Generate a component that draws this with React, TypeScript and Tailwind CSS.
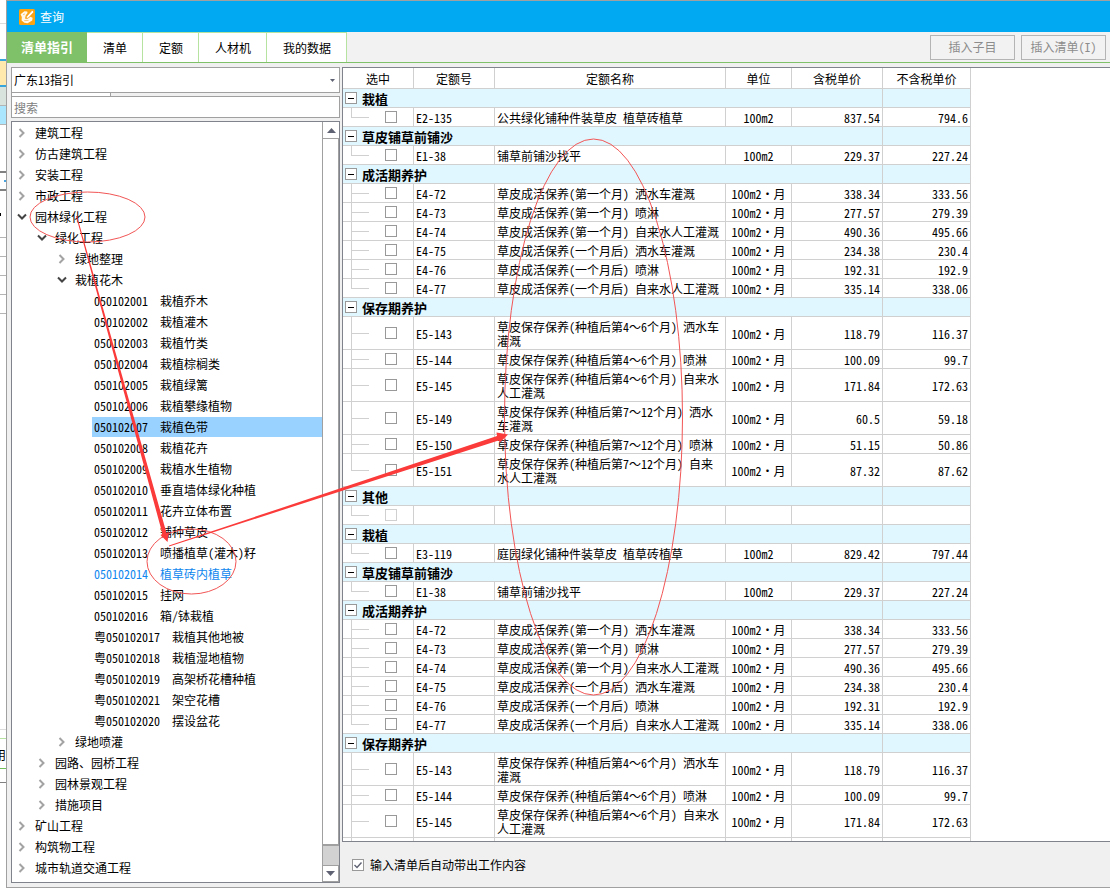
import React, { useState } from "react";

type TreeNode = {
  level: number;
  label: string;
  state?: "open" | "closed";
  selected?: boolean;
  current?: boolean;
};

const tree: TreeNode[] = [
  { level: 0, label: "建筑工程", state: "closed" },
  { level: 0, label: "仿古建筑工程", state: "closed" },
  { level: 0, label: "安装工程", state: "closed" },
  { level: 0, label: "市政工程", state: "closed" },
  { level: 0, label: "园林绿化工程", state: "open" },
  { level: 1, label: "绿化工程", state: "open" },
  { level: 2, label: "绿地整理", state: "closed" },
  { level: 2, label: "栽植花木", state: "open" },
  { level: 3, label: "050102001  栽植乔木" },
  { level: 3, label: "050102002  栽植灌木" },
  { level: 3, label: "050102003  栽植竹类" },
  { level: 3, label: "050102004  栽植棕榈类" },
  { level: 3, label: "050102005  栽植绿篱" },
  { level: 3, label: "050102006  栽植攀缘植物" },
  { level: 3, label: "050102007  栽植色带", selected: true },
  { level: 3, label: "050102008  栽植花卉" },
  { level: 3, label: "050102009  栽植水生植物" },
  { level: 3, label: "050102010  垂直墙体绿化种植" },
  { level: 3, label: "050102011  花卉立体布置" },
  { level: 3, label: "050102012  铺种草皮" },
  { level: 3, label: "050102013  喷播植草(灌木)籽" },
  { level: 3, label: "050102014  植草砖内植草", current: true },
  { level: 3, label: "050102015  挂网" },
  { level: 3, label: "050102016  箱/钵栽植" },
  { level: 3, label: "粤050102017  栽植其他地被" },
  { level: 3, label: "粤050102018  栽植湿地植物" },
  { level: 3, label: "粤050102019  高架桥花槽种植" },
  { level: 3, label: "粤050102021  架空花槽" },
  { level: 3, label: "粤050102020  摆设盆花" },
  { level: 2, label: "绿地喷灌", state: "closed" },
  { level: 1, label: "园路、园桥工程", state: "closed" },
  { level: 1, label: "园林景观工程", state: "closed" },
  { level: 1, label: "措施项目", state: "closed" },
  { level: 0, label: "矿山工程", state: "closed" },
  { level: 0, label: "构筑物工程", state: "closed" },
  { level: 0, label: "城市轨道交通工程", state: "closed" },
];

const indents = ["pl-[5px]", "pl-[25px]", "pl-[45px]", "ml-[80px] pl-[2px]"];

type Quota = [code: string, name: string, unit: string, taxed: string, untaxed: string];
type Group = { title: string; rows: Quota[] };

const month = "100m2・月";

const growing: Quota[] = [
  ["E4-72", "草皮成活保养(第一个月) 洒水车灌溉", month, "338.34", "333.56"],
  ["E4-73", "草皮成活保养(第一个月) 喷淋", month, "277.57", "279.39"],
  ["E4-74", "草皮成活保养(第一个月) 自来水人工灌溉", month, "490.36", "495.66"],
  ["E4-75", "草皮成活保养(一个月后) 洒水车灌溉", month, "234.38", "230.4"],
  ["E4-76", "草皮成活保养(一个月后) 喷淋", month, "192.31", "192.9"],
  ["E4-77", "草皮成活保养(一个月后) 自来水人工灌溉", month, "335.14", "338.06"],
];

const keeping: Quota[] = [
  ["E5-143", "草皮保存保养(种植后第4～6个月) 洒水车灌溉", month, "118.79", "116.37"],
  ["E5-144", "草皮保存保养(种植后第4～6个月) 喷淋", month, "100.09", "99.7"],
  ["E5-145", "草皮保存保养(种植后第4～6个月) 自来水人工灌溉", month, "171.84", "172.63"],
  ["E5-149", "草皮保存保养(种植后第7～12个月) 洒水车灌溉", month, "60.5", "59.18"],
  ["E5-150", "草皮保存保养(种植后第7～12个月) 喷淋", month, "51.15", "50.86"],
  ["E5-151", "草皮保存保养(种植后第7～12个月) 自来水人工灌溉", month, "87.32", "87.62"],
];

const sand: Quota[] = [["E1-38", "铺草前铺沙找平", "100m2", "229.37", "227.24"]];

const blank: Quota = ["", "", "", "", ""];

const groups: Group[] = [
  { title: "栽植", rows: [["E2-135", "公共绿化铺种件装草皮 植草砖植草", "100m2", "837.54", "794.6"]] },
  { title: "草皮铺草前铺沙", rows: sand },
  { title: "成活期养护", rows: growing },
  { title: "保存期养护", rows: keeping },
  { title: "其他", rows: [blank] },
  { title: "栽植", rows: [["E3-119", "庭园绿化铺种件装草皮 植草砖植草", "100m2", "829.42", "797.44"]] },
  { title: "草皮铺草前铺沙", rows: sand },
  { title: "成活期养护", rows: growing },
  { title: "保存期养护", rows: [...keeping.slice(0, 3), blank] },
];

function Chevron({ open }: { open: boolean }) {
  return (
    <svg className="h-[10px] w-[10px] shrink-0" viewBox="0 0 10 10" fill="none" strokeWidth="2" aria-hidden="true">
      {open ? (
        <path d="M1 2.5L5 6.5L9 2.5" stroke="#444444" />
      ) : (
        <path d="M2.5 1L6.5 5L2.5 9" stroke="#a3a3a3" />
      )}
    </svg>
  );
}

function Logo() {
  return (
    <svg className="h-4 w-4" viewBox="0 0 16 16" aria-hidden="true">
      <rect width="16" height="16" rx="1.5" fill="#fca311" />
      <path
        d="M1.6 5.2L5.4 2.2L8.2 2.6L8.6 4L6.8 6.2L6 9.4L8.6 9.6L11.4 7.8L13.6 8.8L13.2 11.4L8.6 14.2L5.4 13.8L2.6 11.4L2.8 8Z"
        fill="#fff8ea"
      />
      <path d="M13.2 1.2L15 3L9.6 8.8L7 9.8L7.8 7.2Z" fill="#ffffff" stroke="#f59a1a" strokeWidth="0.7" />
      <path d="M4 5.8L6 4.8M5.2 11.6L9.6 11.4" stroke="#f7b04a" strokeWidth="0.7" />
    </svg>
  );
}

function BackgroundStrip() {
  return (
    <div className="flex w-[6px] shrink-0 flex-col overflow-hidden bg-white" aria-hidden="true">
      <div className="h-6 shrink-0 border-b border-[#dcdcdc]" />
      <div className="h-[37px] shrink-0 border-b-2 border-[#35a5dc]" />
      <div className="h-[26px] shrink-0 border-b-2 border-[#35a5dc] bg-[#ffe9ad]" />
      <div className="h-[19px] shrink-0 border-b border-[#b4b4b4] bg-[#d9e3dd]" />
      <div className="h-[19px] shrink-0 border-b border-[#b4b4b4] bg-[#aae6fd]" />
      <div className="h-12 shrink-0 border-b-2 border-[#808080]" />
      <div className="flex h-[18px] shrink-0 items-center justify-end border-b-2 border-[#808080]">
        <div className="h-[2px] w-[2px] bg-[#4aa3dc]" />
      </div>
      <div className="flex h-[47px] shrink-0 items-center border-b border-[#b4b4b4]">
        <div className="h-[3px] w-px bg-black" />
      </div>
      <div className="h-[19px] shrink-0 border-b border-[#b4b4b4]" />
      <div className="h-[19px] shrink-0 border-b border-[#b4b4b4]" />
      <div className="h-[19px] shrink-0 border-b border-[#b4b4b4]" />
      <div className="h-[19px] shrink-0 border-b border-[#b4b4b4]" />
      <div className="h-[416px] shrink-0 border-b border-[#dcdcdc]" />
      <div className="h-[9px] shrink-0 border-b border-[#b6e4a0]" />
      <div className="flex h-[30px] shrink-0 items-center justify-end border-b border-[#6fbf58] pt-[2px]">
        <span>用</span>
      </div>
      <div className="h-[14px] shrink-0 border-b border-[#808080]" />
    </div>
  );
}

function ScrollBar() {
  return (
    <div className="flex w-[17px] shrink-0 flex-col border-l border-[#a0a0a0] bg-[#d2d2d2]" aria-hidden="true">
      <div className="flex h-[17px] items-center justify-center border-b border-[#a0a0a0] bg-white">
        <svg className="h-[5px] w-[9px]" viewBox="0 0 9 5">
          <path d="M0 5L4.5 0L9 5Z" fill="#5f6272" />
        </svg>
      </div>
      <div className="flex-1 border-b-2 border-r border-[#a0a0a0] bg-white" />
      <div className="h-[19px]" />
      <div className="flex h-[17px] items-center justify-center border border-l-0 border-[#a0a0a0] bg-white">
        <svg className="h-[5px] w-[9px]" viewBox="0 0 9 5">
          <path d="M0 0L4.5 5L9 0Z" fill="#5f6272" />
        </svg>
      </div>
    </div>
  );
}

function QuotaTable() {
  const line = "border-r border-b border-[#d0d0d0]";
  const cell = line + " px-[2px] pt-[3px] pb-px";
  const firstCell = line + " px-[2px] py-0.5";
  const head = line + " px-0 pt-[2px] pb-0 text-center font-normal";
  return (
    <table className="w-[628px] table-fixed border-separate border-spacing-0 bg-white">
      <colgroup>
        <col className="w-[71px]" />
        <col className="w-[81px]" />
        <col className="w-[231px]" />
        <col className="w-[66px]" />
        <col className="w-[91px]" />
        <col className="w-[88px]" />
      </colgroup>
      <thead>
        <tr className="h-[21px]">
          {["选中", "定额号", "定额名称", "单位", "含税单价", "不含税单价"].map((title) => (
            <th key={title} scope="col" className={head}>
              {title}
            </th>
          ))}
        </tr>
      </thead>
      <tbody>
        {groups.map((group, g) => (
          <React.Fragment key={g}>
            <tr className="h-[19px] bg-[#e1f7ff]">
              <td colSpan={5} className={firstCell}>
                <div className="flex h-[14px] items-center gap-[5px]">
                  <button
                    type="button"
                    aria-label={"折叠 " + group.title}
                    className="flex h-3 w-3 items-center justify-center border border-[#999999] bg-white"
                  >
                    <span className="h-px w-[6px] bg-black" />
                  </button>
                  <span className="pt-[2px] text-[13px] leading-[14px] font-bold">{group.title}</span>
                </div>
              </td>
              <td className={cell} />
            </tr>
            {group.rows.map(([code, name, unit, taxed, untaxed], i) => {
              const last = i === group.rows.length - 1;
              return (
                <tr key={i} className="h-[19px]">
                  <td className={firstCell + " relative"}>
                    <span
                      className={
                        "absolute top-0 left-2 w-px bg-[#d0d0d0] " + (last ? "h-1/2" : "h-full")
                      }
                    />
                    <span className="absolute top-1/2 left-2 h-px w-[18px] bg-[#d0d0d0]" />
                    <input
                      type="checkbox"
                      aria-label={"选中 " + code}
                      disabled={!code}
                      className="ml-10 block h-3 w-3 appearance-none border border-[#999999] bg-white checked:bg-[#5f6272] disabled:border-[#d0d0d0]"
                    />
                  </td>
                  <td className={cell}>{code}</td>
                  <td className={cell}>{name}</td>
                  <td className={cell + " text-center"}>{unit}</td>
                  <td className={cell + " text-right"}>{taxed}</td>
                  <td className={cell + " text-right"}>{untaxed}</td>
                </tr>
              );
            })}
          </React.Fragment>
        ))}
      </tbody>
    </table>
  );
}

function Annotations() {
  return (
    <svg
      className="pointer-events-none absolute top-0 left-0 h-[888px] w-[1110px]"
      viewBox="0 0 1110 888"
      fill="none"
      aria-hidden="true"
    >
      <g stroke="#f25555" strokeWidth="1">
        <ellipse cx="87.5" cy="217" rx="57.5" ry="25" />
        <ellipse cx="191.5" cy="561.5" rx="44.5" ry="32.5" />
        <ellipse cx="593.5" cy="417" rx="89" ry="278" />
      </g>
      <g fill="#fb3a3a">
        <path d="M76 216L77 216L166.5 533L169 532L167.5 542L160.5 535L162.5 534Z" />
        <path d="M169 546.5L169 545.5L497 436L496.5 432.5L508 434.5L500 442.5L498.5 440.5Z" />
      </g>
    </svg>
  );
}

export default function App() {
  const tabs = ["清单", "定额", "人材机", "我的数据"];
  const [keepWork, setKeepWork] = useState(true);

  return (
    <div className="relative flex h-screen overflow-hidden bg-[#f0f0f0] font-['Noto_Sans_Mono_CJK_SC','Noto_Sans_CJK_SC',monospace] text-[12px] leading-[14px] text-black">
      <BackgroundStrip />
      <div className="flex min-w-0 flex-1 flex-col border-t border-b border-l border-[#a0a0a0]">
        <header className="flex h-[31px] shrink-0 items-center gap-[5px] bg-[#00a9f1] pl-3 text-white">
          <Logo />
          <h1>查询</h1>
        </header>

        <nav className="flex h-[31px] shrink-0 justify-between border-b border-[#7ec168] bg-[#f2f2f2]">
          <div className="flex">
            <button type="button" className="w-20 bg-[#7ec168] text-[13px] font-bold text-white">
              清单指引
            </button>
            {tabs.map((tab) => (
              <button
                key={tab}
                type="button"
                className="border-t border-r border-[#b6e4a0] bg-white pt-px pr-[15px] pl-4"
              >
                {tab}
              </button>
            ))}
          </div>
          <div className="flex items-center gap-[6px] pr-1 text-[#8c8c8c]">
            <button type="button" className="h-[25px] w-[85px] border border-[#b4b4b4]">
              插入子目
            </button>
            <button type="button" className="h-[25px] w-[85px] border border-[#b4b4b4]">
              插入清单(I)
            </button>
          </div>
        </nav>

        <main className="flex min-h-0 flex-1 gap-[2px] pt-1 pl-1">
          <aside className="flex w-[329px] shrink-0 flex-col pb-1">
            <div className="grid shrink-0">
              <select
                aria-label="指引"
                className="col-start-1 row-start-1 h-[26px] appearance-none border border-[#a0a0a0] bg-white px-[2px]"
              >
                <option>广东13指引</option>
              </select>
              <svg
                className="pointer-events-none col-start-1 row-start-1 mr-[5px] h-[3px] w-[5px] self-center justify-self-end"
                viewBox="0 0 5 3"
                aria-hidden="true"
              >
                <path d="M0 0H5L2.5 3Z" fill="#5f6272" />
              </svg>
            </div>
            <div className="h-[3px] w-[100px] shrink-0 border-r border-l border-[#a0a0a0] bg-white" />
            <input
              type="text"
              aria-label="搜索"
              placeholder="搜索"
              className="h-[22px] shrink-0 border border-[#a0a0a0] bg-white px-[2px] placeholder:text-[#808080]"
            />
            <div className="mt-[3px] flex min-h-0 flex-1 border border-[#80838c] bg-white">
              <ul className="min-w-0 flex-1 overflow-hidden pt-px">
                {tree.map((node) => (
                  <li
                    key={node.label}
                    className={
                      "mb-px flex h-5 items-center gap-2 whitespace-pre " +
                      indents[node.level] +
                      (node.selected ? " bg-[#99d1ff]" : "") +
                      (node.current ? " text-[#0f87ee]" : "")
                    }
                  >
                    {node.state && <Chevron open={node.state === "open"} />}
                    <span>{node.label}</span>
                  </li>
                ))}
              </ul>
              <ScrollBar />
            </div>
          </aside>

          <section className="flex min-w-0 flex-1 flex-col">
            <div className="min-h-0 flex-1 overflow-hidden border-t border-b border-l border-[#80838c] bg-white">
              <QuotaTable />
            </div>
            <label className="flex h-[45px] shrink-0 items-center gap-[6px] pl-[10px]">
              <span className="grid">
                <input
                  type="checkbox"
                  checked={keepWork}
                  onChange={(event) => setKeepWork(event.target.checked)}
                  className="col-start-1 row-start-1 h-3 w-3 appearance-none border border-[#999999] bg-white"
                />
                {keepWork && (
                  <svg
                    className="pointer-events-none col-start-1 row-start-1 h-3 w-3"
                    viewBox="0 0 12 12"
                    fill="none"
                    aria-hidden="true"
                  >
                    <path d="M2.5 6L5 8.5L9.5 3.5" stroke="#5f6272" strokeWidth="1.4" />
                  </svg>
                )}
              </span>
              <span>输入清单后自动带出工作内容</span>
            </label>
          </section>
        </main>
      </div>
      <Annotations />
    </div>
  );
}
